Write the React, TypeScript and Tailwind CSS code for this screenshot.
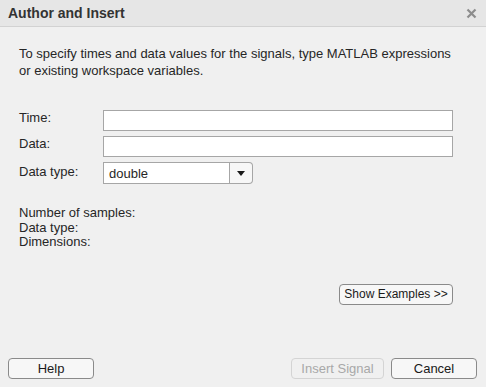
const font = { fontFamily: '"Liberation Sans", Arial, sans-serif' };

const Btn = ({ label, disabled, className }: { label: string; disabled?: boolean; className: string }) => (
    <button
        className={
            "h-[21px] rounded-[4px] border text-[13px] leading-none " +
            (disabled
                ? "border-[#d4d4d4] text-[#a8a8a8] bg-[#f0f0f0] "
                : "border-[#8a8a8a] text-[#1a1a1a] bg-[#f7f7f7] ") +
            className
        }
    >
        {label}
    </button>
);

const App = () => {
    return (
        <div
            className="w-[486px] h-[387px] flex flex-col bg-[#f0f0f0] text-[#262626] overflow-hidden"
            style={font}
        >
            <div className="h-[27px] shrink-0 flex items-center justify-between pl-[8px] pr-[8px] bg-[#e6e6e6] border-b border-[#d2d2d2]">
                <span className="text-[14px] font-bold text-[#333]">Author and Insert</span>
                <svg width="11" height="11" viewBox="0 0 11 11" className="mr-[1px]">
                    <path d="M1.5 1.5 L9.5 9.5 M9.5 1.5 L1.5 9.5" stroke="#8c8c8c" strokeWidth="2.2" />
                </svg>
            </div>

            <div className="flex-1 flex flex-col px-[19px] pt-[18px]">
                <p className="text-[13px] leading-[17px]">
                    To specify times and data values for the signals, type MATLAB expressions
                    <br />
                    or existing workspace variables.
                </p>

                <div className="mt-[31px] grid grid-cols-[84px_350px] gap-y-[5px] text-[13px]">
                    <span className="leading-[15px]">Time:</span>
                    <input className="h-[21px] bg-white border border-[#a6a6a6] outline-none" />
                    <span className="leading-[15px]">Data:</span>
                    <input className="h-[21px] bg-white border border-[#a6a6a6] outline-none" />
                    <span className="leading-[15px] pt-[2px]">Data type:</span>
                    <div className="flex h-[22px] w-[150px]">
                        <div className="w-[127px] bg-white border border-[#a6a6a6] pl-[5px] flex items-center pt-[2px]">
                            double
                        </div>
                        <div className="w-[23px] border border-l-0 border-[#a6a6a6] rounded-r-[4px] bg-[#f7f7f7] flex items-center justify-center">
                            <svg width="8" height="5" viewBox="0 0 8 5">
                                <path d="M0 0 H8 L4 5 Z" fill="#1a1a1a" />
                            </svg>
                        </div>
                    </div>
                </div>

                <div className="mt-[22px] text-[13px] leading-[14.5px]">
                    <p>Number of samples:</p>
                    <p>Data type:</p>
                    <p>Dimensions:</p>
                </div>

                <div className="mt-[34px] flex justify-end pr-[14px]">
                    <button className="h-[21px] w-[114px] rounded-[4px] border border-[#8a8a8a] bg-[#f7f7f7] text-[12px] text-[#1a1a1a]">
                        Show Examples &gt;&gt;
                    </button>
                </div>
            </div>

            <div className="h-[29px] shrink-0 flex items-start px-[8px]">
                <Btn label="Help" className="w-[86px]" />
                <div className="flex-1" />
                <Btn label="Insert Signal" disabled className="w-[93px] mr-[7px]" />
                <Btn label="Cancel" className="w-[86px] mr-[1px]" />
            </div>
        </div>
    );
};

export default App;
